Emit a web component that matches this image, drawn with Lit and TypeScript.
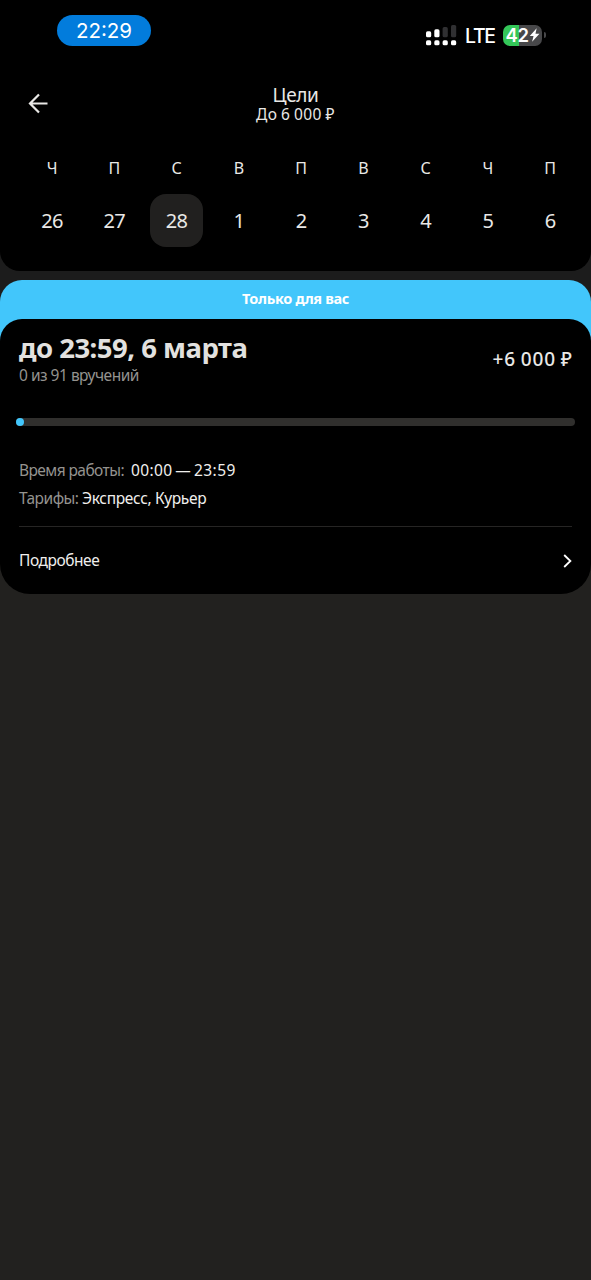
import { LitElement, html, css, svg } from "lit";
import { customElement } from "lit/decorators.js";
import { classMap } from "lit/directives/class-map.js";

const DAYS = [
  { name: "Ч", date: 26 },
  { name: "П", date: 27 },
  { name: "С", date: 28, active: true },
  { name: "В", date: 1 },
  { name: "П", date: 2 },
  { name: "В", date: 3 },
  { name: "С", date: 4 },
  { name: "Ч", date: 5 },
  { name: "П", date: 6 },
];

@customElement("status-bar")
class StatusBar extends LitElement {
  static styles = css`
    :host { display: flex; justify-content: space-between; height: 74px; box-sizing: border-box; padding: 15px 45.5px 0 57px;
      font-family: Inter, "Liberation Sans", sans-serif; color: #fff; }
    .time { width: 94px; height: 31px; border-radius: 16px; background: #027cdc; text-align: center;
      font-size: 20.5px; line-height: 32px; font-weight: 400; letter-spacing: 0; }
    .right { display: flex; align-items: center; height: 40px; }
    .signal { display: block; margin: 1px 8.5px 0 0; }
    .net { font-size: 19.5px; font-weight: 500; line-height: 24px; width: 30px; letter-spacing: -1.3px; margin: 2px 8px 0 0; }
    .battery { display: flex; align-items: center; justify-content: center; width: 39px; height: 21px; border-radius: 7px;
      background: linear-gradient(90deg, #34c759 0 42%, #48484a 42%); font-size: 18.5px; font-weight: 600; line-height: 21px;
      letter-spacing: -0.3px; }
    .cap { width: 2px; height: 6px; margin-left: 1.5px; border-radius: 0 2px 2px 0; background: #48484a; }
  `;
  render() {
    return html`
      <div class="time">22:29</div>
      <div class="right">
        <svg class="signal" width="31" height="22" viewBox="0 0 31 22">
          ${[0, 8.3, 16.6, 25].map((x) => svg`<rect x=${x} y="15.3" width="5.2" height="5" rx="1.6" fill="#fff"/>`)}
          <rect x="0" y="6.3" width="5.2" height="6" rx="1.6" fill="#fff"/>
          <rect x="8.3" y="4.3" width="5.2" height="8" rx="1.6" fill="#fff"/>
          <rect x="16.6" y="2.1" width="5.2" height="10.2" rx="1.6" fill="#303032"/>
          <rect x="25" y="0" width="5.2" height="12.3" rx="1.6" fill="#303032"/>
        </svg>
        <span class="net">LTE</span>
        <span class="battery">42<svg width="11" height="14" viewBox="0 0 10 13"><path d="M7 0.3 0.6 7.4h3.5L2.8 12.7 9.6 5.4H5.9z" fill="#fff"/></svg></span>
        <span class="cap"></span>
      </div>`;
  }
}

@customElement("day-strip")
class DayStrip extends LitElement {
  static styles = css`
    :host { display: grid; grid-template-columns: repeat(9, 62.25px); padding-left: 21px; height: 130px; box-sizing: border-box; }
    .day { display: flex; flex-direction: column; align-items: center; color: #e9e8e6; }
    .name { margin-top: 16px; height: 22px; line-height: 22px; font-size: 16px; }
    .date { margin-top: 15px; width: 53px; height: 53px; line-height: 54px; border-radius: 16px; text-align: center;
      font-size: 20px; letter-spacing: -0.6px; }
    .active { background: #21201f; }
  `;
  render() {
    return DAYS.map((d) => html`<div class="day"><span class="name">${d.name}</span>
      <span class=${classMap({ date: true, active: !!d.active })}>${d.date}</span></div>`);
  }
}

@customElement("goal-card")
class GoalCard extends LitElement {
  static styles = css`
    :host { display: block; margin-top: 9px; border-radius: 22px 22px 30px 30px; background: linear-gradient(#42c6fb 0 80px, transparent 80px); }
    .tag { height: 39px; line-height: 36px; text-align: center; color: #fff; font-size: 14.5px; font-weight: 700; letter-spacing: -0.33px; }
    .card { height: 275px; box-sizing: border-box; border-radius: 22px 22px 30px 30px; background: #000; padding: 12px 19px 0; }
    .top { display: flex; justify-content: space-between; height: 56px; }
    .title { font-size: 27.5px; line-height: 34px; font-weight: 700; color: #e2e1df; letter-spacing: -0.52px; white-space: nowrap; }
    .count { font-size: 15.5px; line-height: 20px; color: #94938f; letter-spacing: -0.5px; }
    .sum { font-size: 19px; line-height: 56px; font-weight: 500; color: #e9e8e6; letter-spacing: 0.9px; word-spacing: -1.1px; margin-right: -0.9px; }
    .bar { height: 8px; margin: 31px -3px 0; border-radius: 4px; background: #302f2d; }
    .dot { width: 8px; height: 8px; border-radius: 4px; background: #42c6fb; }
    .rows { padding-top: 29.5px; height: 70.5px; }
    .row { height: 28px; line-height: 28px; font-size: 15.5px; color: #f0efed; white-space: pre; }
    .label { color: #94938f; }
    .l1 { letter-spacing: -0.57px; }
    .l2 { letter-spacing: -0.5px; }
    .v1 { letter-spacing: 0.4px; word-spacing: -1.6px; }
    .v2 { letter-spacing: -0.33px; }
    .more { display: flex; justify-content: space-between; align-items: center; height: 67px; border-top: 1px solid #262524;
      font-size: 15.5px; color: #f0efed; letter-spacing: -0.45px; }
    .more span { margin-bottom: 2px; }
  `;
  render() {
    return html`
      <div class="tag">Только для вас</div>
      <div class="card">
        <div class="top">
          <div><div class="title">до 23:59, 6 марта</div><div class="count">0 из 91 вручений</div></div>
          <div class="sum">+6 000 ₽</div>
        </div>
        <div class="bar"><div class="dot"></div></div>
        <div class="rows">
          <div class="row"><span class="label l1">Время работы:  </span><span class="v1">00:00 — 23:59</span></div>
          <div class="row"><span class="label l2">Тарифы: </span><span class="v2">Экспресс, Курьер</span></div>
        </div>
        <div class="more"><span>Подробнее</span>
          <svg width="9" height="14" viewBox="0 0 9 14"><path d="M1.2 1 7.4 7 1.2 13" fill="none" stroke="#fff" stroke-width="1.8"/></svg>
        </div>
      </div>`;
  }
}

@customElement("app-root")
class AppRoot extends LitElement {
  static styles = css`
    :host { display: block; height: 1280px; overflow: hidden; background: linear-gradient(#1c1c1c 0 400px, #22211f 400px);
      font-family: "Noto Sans", "Open Sans", sans-serif; }
    .panel { height: 271px; background: #000; border-radius: 0 0 20px 20px; }
    .head { display: grid; grid-template-columns: 60px 1fr 60px; height: 67px; }
    .back { margin: 19px 0 0 28px; }
    .titles { text-align: center; color: #e9e8e6; padding-top: 11px; }
    .h1 { font-size: 19px; line-height: 20px; letter-spacing: -0.4px; }
    .h2 { font-size: 15.5px; line-height: 19px; letter-spacing: 0.5px; word-spacing: -1px; }
  `;
  render() {
    return html`
      <div class="panel">
        <status-bar></status-bar>
        <div class="head">
          <svg class="back" width="21" height="21" viewBox="0 0 21 21"><path d="M19.5 10.5H2M11 1.5 2 10.5l9 9" fill="none" stroke="#e9e8e6" stroke-width="2.2"/></svg>
          <div class="titles"><div class="h1">Цели</div><div class="h2">До 6 000 ₽</div></div>
        </div>
        <day-strip></day-strip>
      </div>
      <goal-card></goal-card>`;
  }
}
